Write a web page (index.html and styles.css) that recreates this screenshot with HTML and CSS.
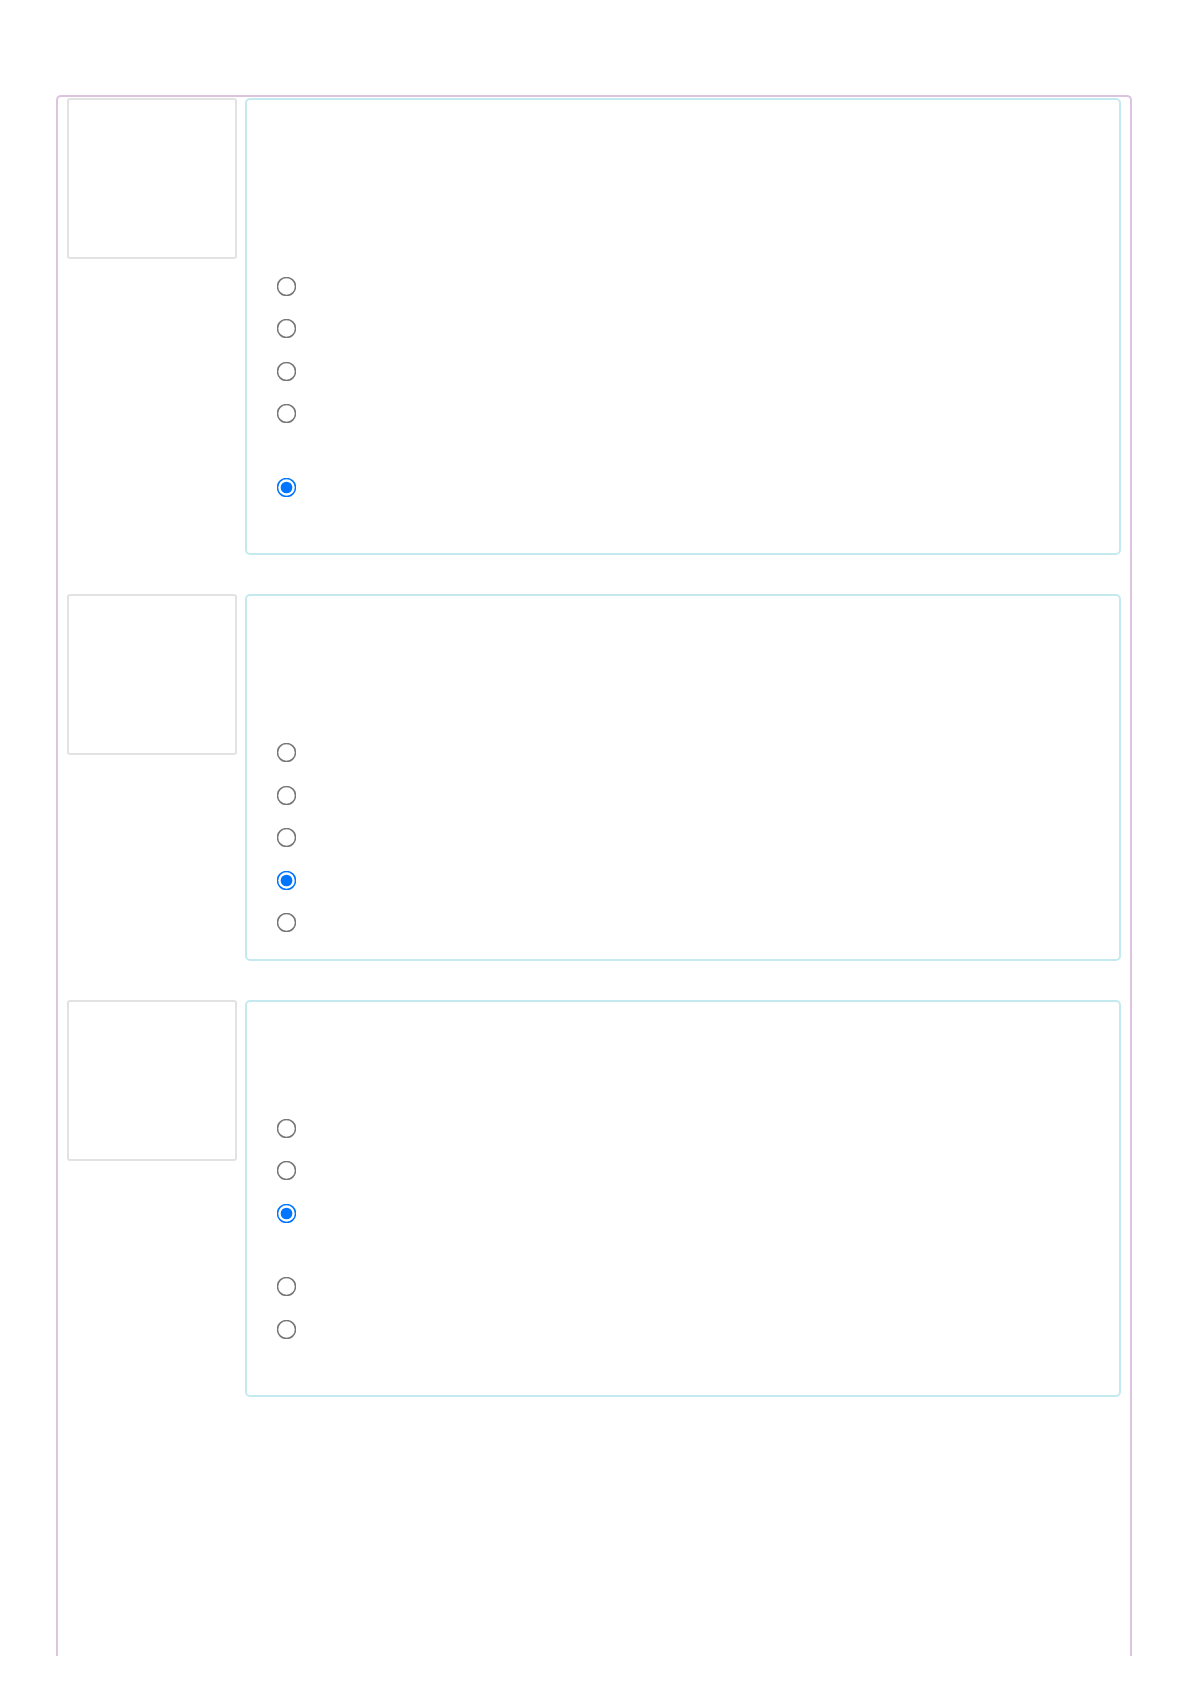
FILE: index.html
```html
<!DOCTYPE html>
<html lang="en">
<head>
  <meta charset="UTF-8" />
  <meta name="viewport" content="width=device-width, initial-scale=1.0" />
  <title>Quiz</title>
  <link rel="stylesheet" href="styles.css">
</head>
<body>
  <div class="quiz">
    <div class="question-row">
      <div class="thumb"></div>
      <div class="card">
        <div class="question q-tall"></div>
        <label class="option"><input type="radio" name="q1" /></label>
        <label class="option"><input type="radio" name="q1" /></label>
        <label class="option"><input type="radio" name="q1" /></label>
        <label class="option wrap"><input type="radio" name="q1" /></label>
        <label class="option"><input type="radio" name="q1" checked /></label>
        <div class="note"></div>
      </div>
    </div>

    <div class="question-row">
      <div class="thumb"></div>
      <div class="card">
        <div class="question q-mid"></div>
        <label class="option"><input type="radio" name="q2" /></label>
        <label class="option"><input type="radio" name="q2" /></label>
        <label class="option"><input type="radio" name="q2" /></label>
        <label class="option"><input type="radio" name="q2" checked /></label>
        <label class="option"><input type="radio" name="q2" /></label>
      </div>
    </div>

    <div class="question-row">
      <div class="thumb"></div>
      <div class="card">
        <div class="question q-short"></div>
        <label class="option"><input type="radio" name="q3" /></label>
        <label class="option"><input type="radio" name="q3" /></label>
        <label class="option wrap"><input type="radio" name="q3" checked /></label>
        <label class="option"><input type="radio" name="q3" /></label>
        <label class="option"><input type="radio" name="q3" /></label>
        <div class="note"></div>
      </div>
    </div>
  </div>
</body>
</html>
```

FILE: styles.css
```css
body {
  margin: 0;
  padding: 0;
  background: #fff;
  font-family: 'Liberation Sans', Arial, sans-serif;
  color: #fff;
}
.quiz {
  box-sizing: border-box;
  width: 1076px;
  height: 1561px;
  margin: 95px auto 0;
  padding: 1px 9px 0;
  border: 2px solid #dcc4de;
  border-bottom: none;
  border-radius: 5px 5px 0 0;
}
.question-row {
  display: flex;
  align-items: flex-start;
  gap: 8px;
  margin-bottom: 39px;
}
.thumb {
  box-sizing: border-box;
  flex: 0 0 170px;
  height: 161px;
  border: 2px solid #e2e2e2;
  border-radius: 3px;
}
.card {
  flex: 1;
  padding: 15px 20px 15px 33px;
  border: 2px solid #c4eaf0;
  border-radius: 5px;
}
.q-tall {
  height: 150px;
}
.q-mid {
  height: 121px;
}
.q-short {
  height: 90px;
}
.option {
  display: flex;
  align-items: center;
  height: 42.5px;
}
.option.wrap {
  margin-bottom: 31px;
}
.option input {
  width: 13px;
  height: 13px;
  margin: 0;
  transform: scale(1.5);
}
.note {
  height: 29px;
}
```
